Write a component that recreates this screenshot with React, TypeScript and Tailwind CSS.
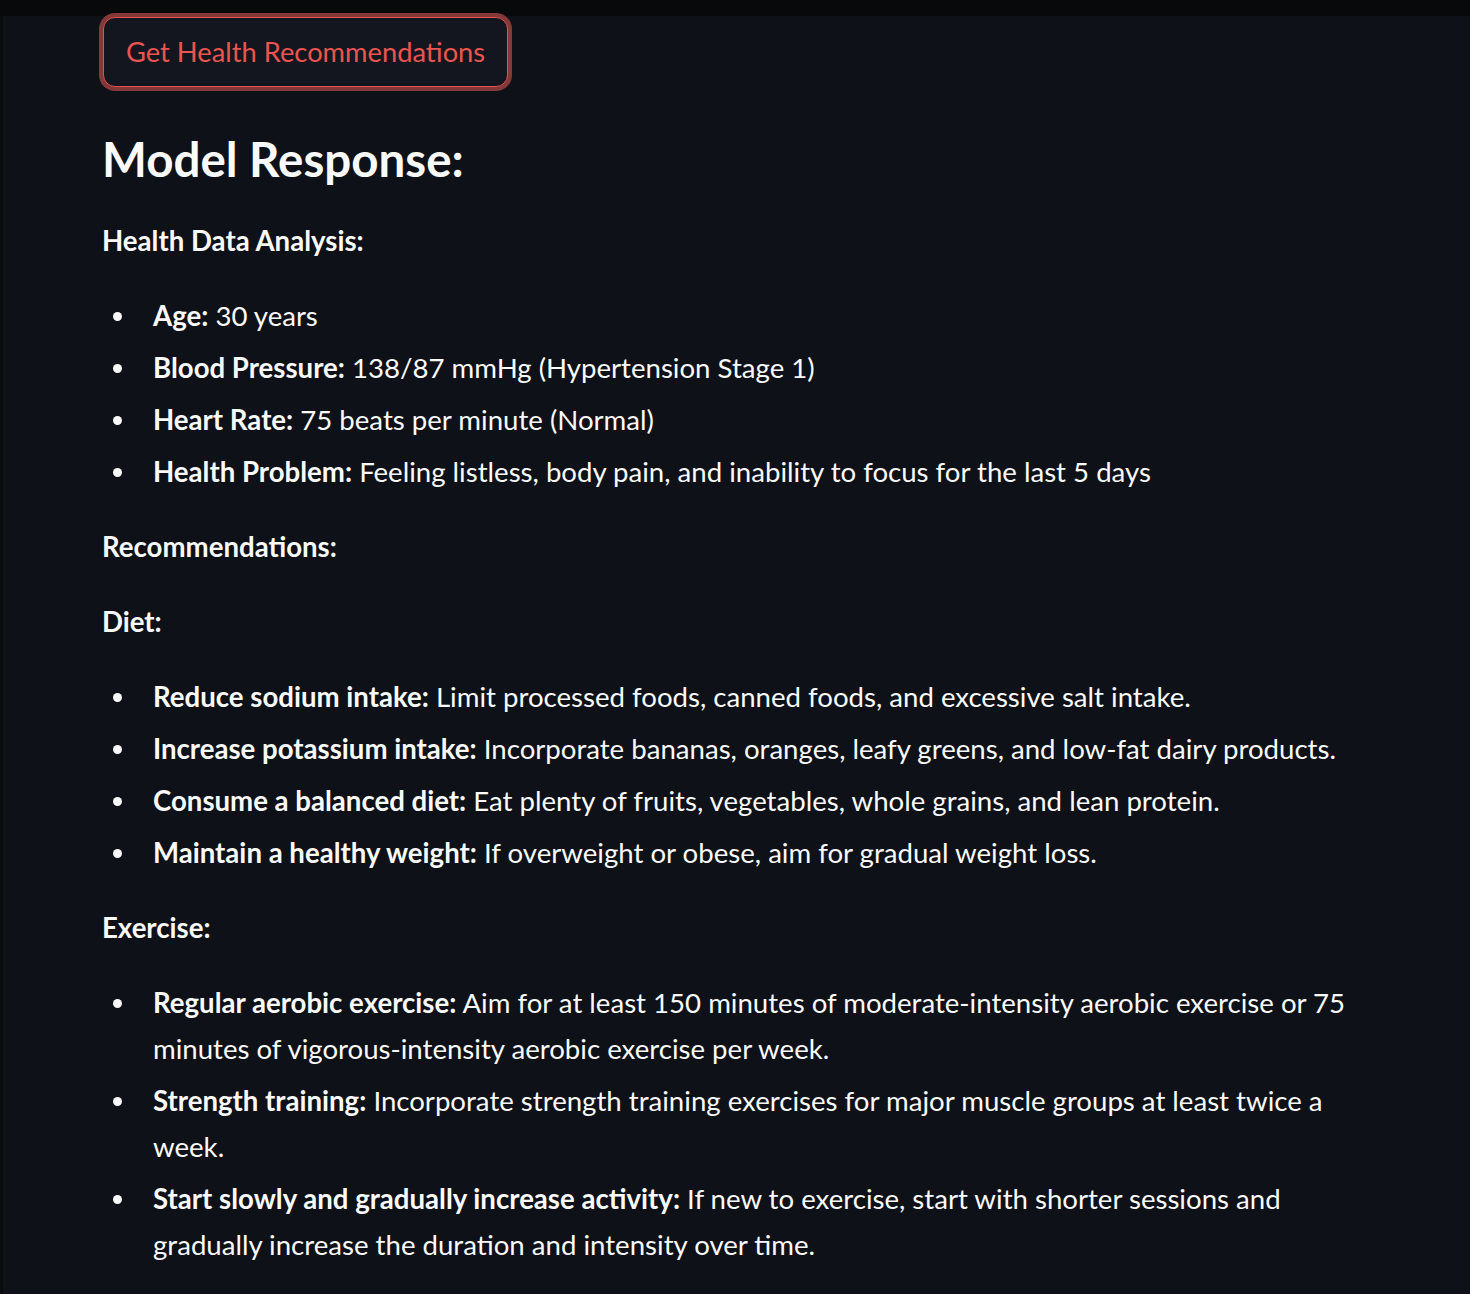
import React from "react";

type Item = { label: string; lines: string[] };

const analysis: Item[] = [
  { label: "Age:", lines: ["30 years"] },
  { label: "Blood Pressure:", lines: ["138/87 mmHg (Hypertension Stage 1)"] },
  { label: "Heart Rate:", lines: ["75 beats per minute (Normal)"] },
  { label: "Health Problem:", lines: ["Feeling listless, body pain, and inability to focus for the last 5 days"] },
];

const diet: Item[] = [
  { label: "Reduce sodium intake:", lines: ["Limit processed foods, canned foods, and excessive salt intake."] },
  { label: "Increase potassium intake:", lines: ["Incorporate bananas, oranges, leafy greens, and low-fat dairy products."] },
  { label: "Consume a balanced diet:", lines: ["Eat plenty of fruits, vegetables, whole grains, and lean protein."] },
  { label: "Maintain a healthy weight:", lines: ["If overweight or obese, aim for gradual weight loss."] },
];

const exercise: Item[] = [
  {
    label: "Regular aerobic exercise:",
    lines: [
      "Aim for at least 150 minutes of moderate-intensity aerobic exercise or 75",
      "minutes of vigorous-intensity aerobic exercise per week.",
    ],
  },
  {
    label: "Strength training:",
    lines: ["Incorporate strength training exercises for major muscle groups at least twice a", "week."],
  },
  {
    label: "Start slowly and gradually increase activity:",
    lines: ["If new to exercise, start with shorter sessions and", "gradually increase the duration and intensity over time."],
  },
];

function List({ items }: { items: Item[] }) {
  return (
    <ul className="flex flex-col gap-[6px] mb-[29px]">
      {items.map((it) => (
        <li key={it.label} className="flex">
          <span className="w-[51px] shrink-0 flex items-center h-[46px] pl-[11px]">
            <span className="w-[9px] h-[9px] rounded-full bg-[#fafafa]" />
          </span>
          <div className="whitespace-nowrap">
            <strong className="font-bold">{it.label}</strong> {it.lines[0]}
            {it.lines.slice(1).map((l) => (
              <React.Fragment key={l}>
                <br />
                {l}
              </React.Fragment>
            ))}
          </div>
        </li>
      ))}
    </ul>
  );
}

function Label({ children }: { children: React.ReactNode }) {
  return <p className="font-bold mb-[29px]">{children}</p>;
}

export default function App() {
  return (
    <div className="min-h-[1294px] bg-[#08090b] pt-[16px]" style={{ fontFamily: "Lato, 'Noto Sans', sans-serif" }}>
      <div className="min-h-[1278px] bg-[#0e1117] border-l-[3px] border-[#0a0b0f] pl-[99px] text-[#fafafa] text-[27.6px] leading-[46px]">
        <button className="ml-[1px] mt-[1px] mb-[42px] h-[70px] px-[22px] rounded-[12px] border border-[#e05252] bg-[#13161e] text-[#ec5450] text-[27.3px] ring-[4px] ring-[#853838]">
          Get Health Recommendations
        </button>
        <h3 className="text-[47.5px] font-bold leading-[60px] mb-[29px]">Model Response:</h3>
        <Label>Health Data Analysis:</Label>
        <List items={analysis} />
        <Label>Recommendations:</Label>
        <Label>Diet:</Label>
        <List items={diet} />
        <Label>Exercise:</Label>
        <List items={exercise} />
      </div>
    </div>
  );
}
